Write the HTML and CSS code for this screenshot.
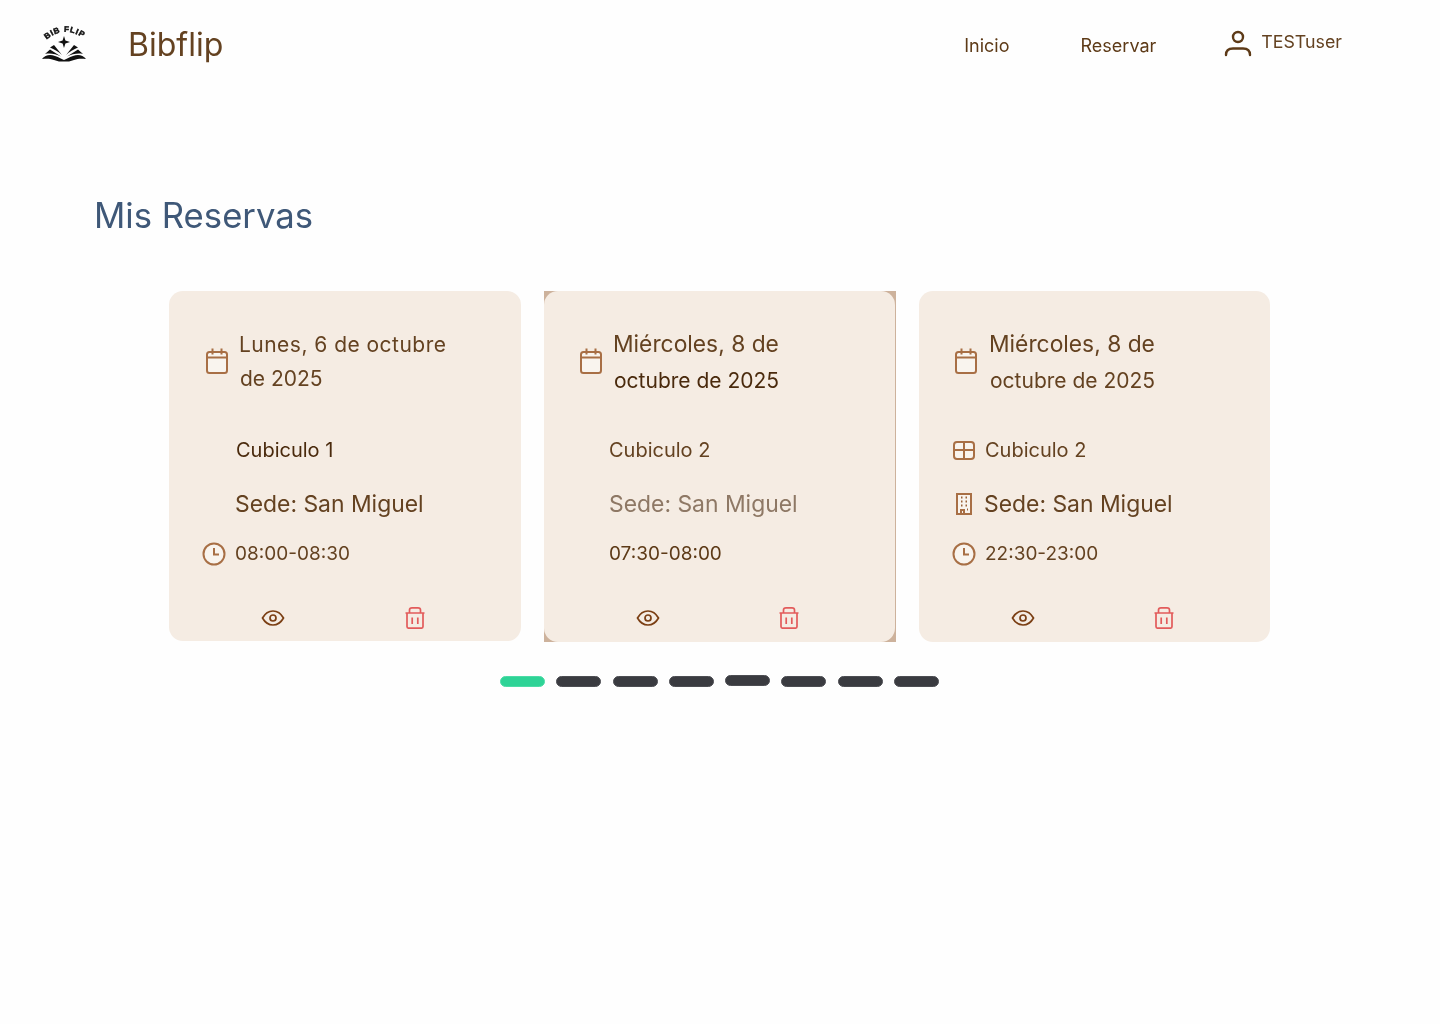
FILE: index.html
```html
<!DOCTYPE html>
<html lang="es">
<head>
<meta charset="utf-8">
<title>Bibflip</title>
<link rel="stylesheet" href="styles.css">
</head>
<body>
<header class="topbar">
  <div class="brand">
    <svg class="logo" viewBox="0 0 46 40" width="46" height="40" aria-hidden="true">
      <defs><path id="arc" d="M3 20 Q23 1 45 18"/></defs>
      <text class="logo-text"><textPath href="#arc" startOffset="50%" text-anchor="middle">BIB FLIP</textPath></text>
      <path d="M23 14 L24.400 18.600 L29 20 L24.400 21.400 L23 26 L21.600 21.400 L17 20 L21.600 18.600Z" fill="#111"/>
      <path d="M1 37 C4 33 9 32 14 34 C18 35.500 21 37 23 38 C25 37 28 35.500 32 34 C37 32 42 33 45 37 C40 36.500 37 36.500 33 38 L28 39.500 H18 L13 38 C9 36.500 6 36.500 1 37Z" fill="#111"/>
      <path d="M4 32 L9 27.500 L20 34.500 C15 32 9 31 4 32ZM9 25.500 L13 23 L21 33 C18 30 13 27 9 25.500ZM42 32 L37 27.500 L26 34.500 C31 32 37 31 42 32ZM37 25.500 L33 23 L25 33 C28 30 33 27 37 25.500Z" fill="#111"/>
    </svg>
    <span class="brand-name">Bibflip</span>
  </div>
  <nav class="nav">
    <a class="nav-link">Inicio</a>
    <a class="nav-link">Reservar</a>
    <div class="user">
      <svg class="user-icon" viewBox="0 0 28 28" width="28" height="28" fill="none" stroke="#5d3a17" stroke-width="2.400" stroke-linecap="round" aria-hidden="true">
        <circle cx="14" cy="7" r="5"/>
        <path d="M2 25 C2 20.500 5 18.500 9 18.500 H19 C23 18.500 26 20.500 26 25"/>
      </svg>
      <span class="user-name">TESTuser</span>
    </div>
  </nav>
</header>

<main class="page">
  <h1 class="title">Mis Reservas</h1>

  <section class="cards">
    <article class="card card-first">
      <div class="card-date">
        <svg class="ico ico-cal" viewBox="0 0 22 26" aria-hidden="true"><rect x="1" y="4" width="20" height="21" rx="2.500"/><path d="M1 9.500H21M6.500 0.500V6.500M15.500 0.500V6.500"/></svg>
        <p class="date-text"><span class="date-spaced">Lunes, 6 de octubre</span><br><span class="date-second">de 2025</span></p>
      </div>
      <p class="row row-cubiculo dark-text">Cubiculo 1</p>
      <p class="row row-sede">Sede: San Miguel</p>
      <div class="row row-time"><svg class="ico ico-clock" viewBox="0 0 24 24" aria-hidden="true"><circle cx="12" cy="12" r="10.500"/><path d="M12 6V12.500H17"/></svg><span>08:00-08:30</span></div>
      <div class="actions">
        <svg class="act act-eye" viewBox="0 0 24 18" aria-hidden="true"><path d="M1.500 9C4 4.500 7.500 2 12 2S20 4.500 22.500 9C20 13.500 16.500 16 12 16S4 13.500 1.500 9Z"/><circle cx="12" cy="9" r="3"/></svg>
        <svg class="act act-trash" viewBox="0 0 20 22" aria-hidden="true"><path d="M0.500 6H19.500M2 6V19.500Q2 21.200 4 21.200H16Q18 21.200 18 19.500V6M4.500 6V3Q4.500 0.900 7 0.900H13Q15.500 0.900 15.500 3V6M7.200 10.500V17M12.800 10.500V17"/></svg>
      </div>
    </article>

    <div class="card-frame">
      <article class="card card-second">
        <div class="card-date">
          <svg class="ico ico-cal" viewBox="0 0 22 26" aria-hidden="true"><rect x="1" y="4" width="20" height="21" rx="2.500"/><path d="M1 9.500H21M6.500 0.500V6.500M15.500 0.500V6.500"/></svg>
          <p class="date-text"><span class="date-large">Miércoles, 8 de</span><br><span class="date-second dark-text">octubre de 2025</span></p>
        </div>
        <p class="row row-cubiculo">Cubiculo 2</p>
        <p class="row row-sede muted-text">Sede: San Miguel</p>
        <div class="row row-time"><span class="time-dark">07:30-08:00</span></div>
        <div class="actions">
          <svg class="act act-eye" viewBox="0 0 24 18" aria-hidden="true"><path d="M1.500 9C4 4.500 7.500 2 12 2S20 4.500 22.500 9C20 13.500 16.500 16 12 16S4 13.500 1.500 9Z"/><circle cx="12" cy="9" r="3"/></svg>
          <svg class="act act-trash" viewBox="0 0 20 22" aria-hidden="true"><path d="M0.500 6H19.500M2 6V19.500Q2 21.200 4 21.200H16Q18 21.200 18 19.500V6M4.500 6V3Q4.500 0.900 7 0.900H13Q15.500 0.900 15.500 3V6M7.200 10.500V17M12.800 10.500V17"/></svg>
        </div>
      </article>
    </div>

    <article class="card card-third">
      <div class="card-date">
        <svg class="ico ico-cal" viewBox="0 0 22 26" aria-hidden="true"><rect x="1" y="4" width="20" height="21" rx="2.500"/><path d="M1 9.500H21M6.500 0.500V6.500M15.500 0.500V6.500"/></svg>
        <p class="date-text"><span class="date-large">Miércoles, 8 de</span><br><span class="date-second">octubre de 2025</span></p>
      </div>
      <div class="row row-cubiculo"><svg class="ico ico-grid" viewBox="0 0 22 19" aria-hidden="true"><rect x="1" y="1" width="20" height="17" rx="3"/><path d="M11 1V18M1 9H21"/></svg><span>Cubiculo 2</span></div>
      <div class="row row-sede"><svg class="ico ico-building" viewBox="0 0 16 22" aria-hidden="true"><path d="M1 1H15V21H1ZM5 21V17H8V21"/><path class="dots" d="M5 4.500H6.500M9.500 4.500H11M5 8.500H6.500M9.500 8.500H11M5 12.500H6.500M9.500 12.500H11M11 16.500H12"/></svg><span>Sede: San Miguel</span></div>
      <div class="row row-time"><svg class="ico ico-clock" viewBox="0 0 24 24" aria-hidden="true"><circle cx="12" cy="12" r="10.500"/><path d="M12 6V12.500H17"/></svg><span>22:30-23:00</span></div>
      <div class="actions">
        <svg class="act act-eye" viewBox="0 0 24 18" aria-hidden="true"><path d="M1.500 9C4 4.500 7.500 2 12 2S20 4.500 22.500 9C20 13.500 16.500 16 12 16S4 13.500 1.500 9Z"/><circle cx="12" cy="9" r="3"/></svg>
        <svg class="act act-trash" viewBox="0 0 20 22" aria-hidden="true"><path d="M0.500 6H19.500M2 6V19.500Q2 21.200 4 21.200H16Q18 21.200 18 19.500V6M4.500 6V3Q4.500 0.900 7 0.900H13Q15.500 0.900 15.500 3V6M7.200 10.500V17M12.800 10.500V17"/></svg>
      </div>
    </article>
  </section>

  <div class="pager">
    <span class="dot dot-active"></span>
    <span class="dot"></span>
    <span class="dot"></span>
    <span class="dot"></span>
    <span class="dot dot-raised"></span>
    <span class="dot"></span>
    <span class="dot"></span>
    <span class="dot"></span>
  </div>
</main>
</body>
</html>
```
FILE: styles.css
```css
* { box-sizing: border-box; }
html, body { margin: 0; padding: 0; }
body {
  height: 1024px;
  background: #fefefe;
  font-family: Inter, "Noto Sans", sans-serif;
  color: #644221;
}
p, h1 { margin: 0; font-weight: 400; }

.topbar, .page { will-change: opacity; }

.topbar {
  height: 88px;
  display: flex;
  align-items: center;
  justify-content: space-between;
  padding: 0 98px 0 41px;
}
.brand { display: flex; align-items: center; gap: 41px; }
.logo { display: block; margin-top: -5px; }
.logo-text { font: 900 8px "Liberation Sans", sans-serif; letter-spacing: 0.800px; fill: #111; stroke: #111; stroke-width: 0.500px; }
.brand-name { font-size: 32px; line-height: 40px; color: #644221; margin-top: 2px; }

.nav { display: flex; align-items: center; }
.nav-link { font-size: 18px; line-height: 24px; color: #5d3a17; margin-right: 71px; margin-top: 4px; }
.user { display: flex; align-items: center; gap: 9px; margin-top: -2px; margin-left: -3px; }
.user-icon { display: block; margin-top: 2px; }
.user-name { font-size: 17.800px; line-height: 24px; color: #644221; margin-top: -2px; }

.page { padding: 0 170px 0 94px; }
.title { font-size: 34.700px; line-height: 44px; color: #3f5878; margin-top: 105px; }

.cards {
  display: flex;
  gap: 23px;
  margin: 54px 0 0 75px;
  align-items: flex-start;
}
.card {
  background: #f5ece3;
  border-radius: 14px;
  width: 352px;
  height: 350px;
  padding: 36px 0 0 34px;
  display: flex;
  flex-direction: column;
}
.card-third { width: 351px; height: 351px; }
.card-frame {
  width: 352px;
  height: 351px;
  background: #cdb29c;
  padding: 0 1px 0 0;
}
.card-second { width: 351px; height: 351px; padding-left: 35px; }

.card-date { display: flex; align-items: flex-start; gap: 11px; height: 70px; padding-left: 3px; }
.card-second .card-date { padding-left: 1px; }
.card-third .card-date { padding-left: 2px; gap: 12px; }
.date-text { font-size: 21px; line-height: 34px; color: #644221; margin-top: 1px; }
.date-spaced { letter-spacing: 0.470px; }
.date-large { font-size: 22.800px; }
.date-second { margin-left: 1px; }
.card-second .date-text, .card-third .date-text { line-height: 36px; margin-top: -1px; }
.dark-text { color: #4a2a0d; }
.muted-text { color: #8e7865; }
.time-dark { color: #5d3a17; }

.ico { fill: #f9f4ee; stroke: #a86f45; stroke-width: 2; flex: none; display: block; }
.ico-cal { width: 22px; height: 26px; margin-top: 21px; }
.ico-clock { width: 24px; height: 24px; }
.ico-grid { width: 22px; height: 19px; }
.ico-building { width: 16px; height: 22px; }
.dots { stroke-width: 2; stroke: #9a6238; }

.row { display: flex; align-items: center; }
.row-cubiculo { font-size: 20px; line-height: 24px; margin: 41px 0 0 33px; }
.row-sede { font-size: 22.900px; line-height: 30px; margin: 27px 0 0 32px; }
.row-time { font-size: 19px; line-height: 24px; margin: 23px 0 0 32px; }

.card-first .row-time { margin-left: 0; }
.card-first .row-time .ico { margin-right: 9px; margin-left: -1px; }
.card-second .row-cubiculo, .card-second .row-sede, .card-second .row-time { margin-left: 30px; }

.card-third .row-cubiculo { margin-left: 0; gap: 10px; }
.card-third .row-sede { margin-left: 3px; gap: 12px; }
.card-third .row-time { margin-left: -1px; gap: 9px; }

.actions {
  display: flex;
  gap: 120px;
  padding-left: 58px;
  margin-top: 41px;
  align-items: center;
}
.card-second .actions { padding-left: 57px; gap: 119px; }
.card-third .actions { gap: 119px; }
.act { display: block; fill: none; }
.act-eye { width: 24px; height: 18px; stroke: #7b3f14; stroke-width: 1.700; }
.act-trash { width: 20px; height: 22px; stroke: #e25b5b; stroke-width: 1.700; }

.pager {
  display: flex;
  gap: 11.300px;
  margin: 34px 0 0 406px;
}
.dot {
  width: 45px;
  height: 11px;
  border-radius: 6px;
  background: #3a3b40;
  border: 1px solid #4c4d52;
}
.dot-active { background: #2ed396; border-color: #4cdba6; }
.dot-raised { margin-top: -1px; margin-bottom: 1px; }
```
